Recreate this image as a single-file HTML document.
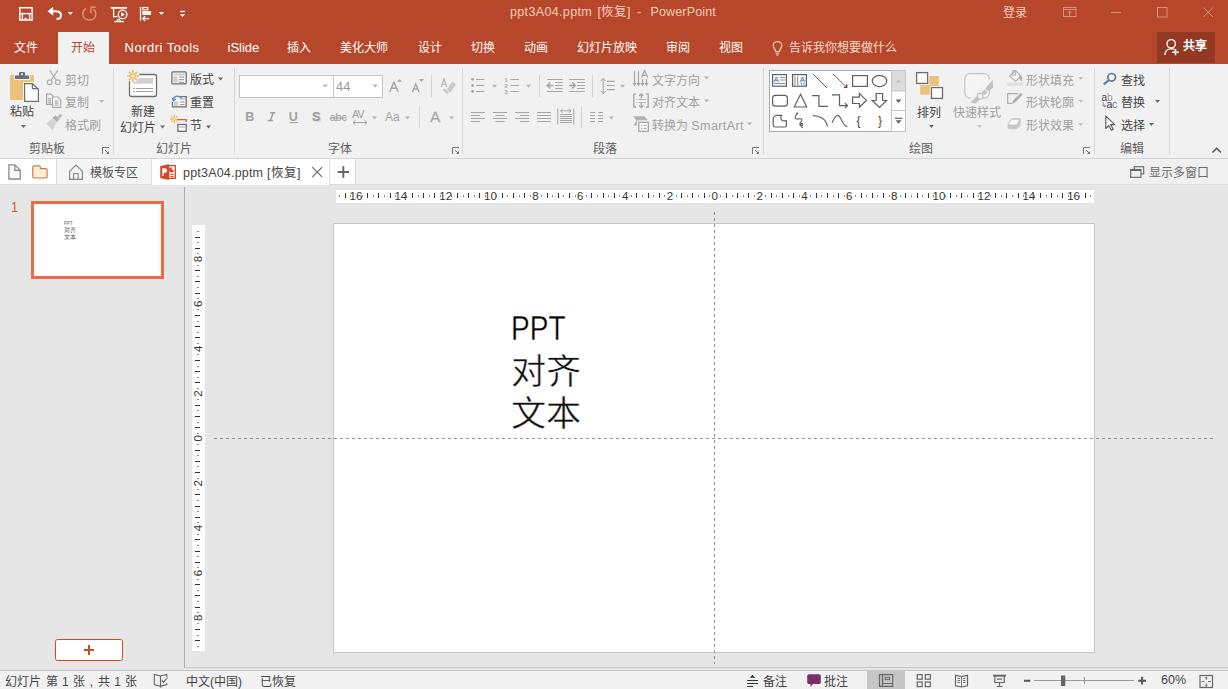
<!DOCTYPE html>
<html lang="zh-CN">
<head>
<meta charset="utf-8">
<style>
*{margin:0;padding:0;box-sizing:border-box}
html,body{width:1228px;height:689px;overflow:hidden;background:#e6e6e6;font-family:"Liberation Sans",sans-serif;}
.a{position:absolute;white-space:nowrap}
svg{position:absolute;overflow:visible}
#title{position:absolute;left:0;top:0;width:1228px;height:64px;background:#b7472a}
.tab{position:absolute;top:32px;height:32px;line-height:32px;font-size:12px;color:#fff}
#ribbon{position:absolute;left:0;top:64px;width:1228px;height:95px;background:#f1f1f1;border-bottom:1px solid #d5d5d5}
.gl{position:absolute;top:139px;font-size:12px;color:#5e5e5e}
.ttl{top:4px;font-size:12.5px;line-height:16px;color:#f3cdb8}
.sep{position:absolute;top:68px;width:1px;height:86px;background:#d6d6d6}
.rt{position:absolute;font-size:12px;color:#9c9c9c}
.t{font-size:12px;line-height:16px}
.en{color:#444}
.dis{color:#a0a0a0}
#docbar{position:absolute;left:0;top:159px;width:1228px;height:26px;background:#f0f0f0;border-bottom:1px solid #dcdcdc}
#status{position:absolute;left:0;top:670px;width:1228px;height:19px;background:#f1f1f1;border-top:1px solid #c6c6c6}
.st{position:absolute;top:673.5px;font-size:12px;color:#444;line-height:17px}
</style>
</head>
<body>
<div id="title"></div>
<!-- title text -->
<div class="a ttl" style="left:510px;letter-spacing:0.35px">ppt3A04.pptm</div>
<div class="a ttl" style="left:597.5px">[恢复]</div>
<div class="a ttl" style="left:637px">-</div>
<div class="a ttl" style="left:650.5px;letter-spacing:0.15px">PowerPoint</div>
<div class="a" style="left:1003px;top:5px;font-size:12px;color:#f3cdb8;line-height:16px">登录</div>

<!-- tabs -->
<div style="position:absolute;left:58px;top:32px;width:51px;height:32px;background:#f1f1f1"></div>
<div class="tab" style="left:14px">文件</div>
<div class="tab" style="left:71px;color:#b7472a">开始</div>
<div class="tab" style="left:124.5px;top:31.5px;font-size:13px;letter-spacing:0.5px">Nordri Tools</div>
<div class="tab" style="left:227.5px;top:31.5px;font-size:13px">iSlide</div>
<div class="tab" style="left:287px">插入</div>
<div class="tab" style="left:340px">美化大师</div>
<div class="tab" style="left:418px">设计</div>
<div class="tab" style="left:471px">切换</div>
<div class="tab" style="left:524px">动画</div>
<div class="tab" style="left:577px">幻灯片放映</div>
<div class="tab" style="left:666px">审阅</div>
<div class="tab" style="left:719px">视图</div>
<div class="tab" style="left:789px;color:#f6dcd0">告诉我你想要做什么</div>
<div style="position:absolute;left:1157px;top:32px;width:58px;height:31px;background:#923823"></div>
<div class="tab" style="left:1183px;top:30px;font-weight:bold">共享</div>

<div id="ribbon"></div>
<div id="docbar"></div>
<div id="status"></div>
<div style="position:absolute;left:0;top:159px;width:57px;height:25px;background:#fff;border-right:1px solid #dedede"></div>
<div style="position:absolute;left:58px;top:159px;width:94px;height:25px;background:#f5f5f5;border-right:1px solid #dedede"></div>
<div style="position:absolute;left:152px;top:159px;width:178px;height:26px;background:#fff;border-right:1px solid #dedede"></div>
<div style="position:absolute;left:330px;top:159px;width:26px;height:25px;background:#fff;border-right:1px solid #dedede"></div>

<svg width="1228" height="689" style="left:0;top:0" viewBox="0 0 1228 689">
<!-- paste -->
<rect x="10" y="75" width="24" height="25" rx="1" fill="#ebc27a"/>
<rect x="14" y="74" width="16" height="6" fill="#f1f1f1"/>
<rect x="15" y="75.5" width="14" height="3.5" fill="#6d6e71"/>
<rect x="19" y="72" width="6" height="4.5" rx="1" fill="#6d6e71"/>
<rect x="21" y="73.3" width="2" height="1.6" fill="#f1f1f1"/>
<rect x="23" y="82" width="17" height="21" fill="#f1f1f1"/>
<path d="M24.6,83.6H32.4L38.4,89.6V101.4H24.6Z" fill="#fff" stroke="#6d6e71" stroke-width="1.2"/>
<path d="M32.4,83.6V88.6H38.4" fill="none" stroke="#6d6e71" stroke-width="1.2"/>
<path d="M21,125H26L23.5,128Z" fill="#666"/>
<!-- scissors -->
<g stroke="#b0b0b0" stroke-width="1.3" fill="none">
<path d="M49.7,70.4L56.2,80.2M57.8,70.4L51.2,80.2"/>
<circle cx="49.7" cy="82.2" r="2.4"/><circle cx="57.8" cy="82.2" r="2.4"/>
</g>
<!-- copy -->
<g stroke="#a8a8a8" stroke-width="1.2" fill="#f1f1f1">
<path d="M46.6,94.1H51L53,96.1V104.4H46.6Z"/>
<path d="M52.6,97H57.8L60.6,99.8V107.4H52.6Z" fill="#fff"/>
<path d="M48.3,98.6H51M48.3,100.6H51M48.3,102.6H51M54.6,101.2H58.6M54.6,103.2H58.6M54.6,105.2H58.6" fill="none"/>
</g>
<!-- format painter -->
<path d="M46.3,123.5L52.5,118.5L56.5,122.5L52.6,130.2Z" fill="#d4d4d4"/>
<path d="M52.5,118L55.5,115.2L59.6,119.3L56.8,122.3Z" fill="#b4b4b4"/>
<path d="M57.5,116.5L60.2,113.8L62.2,115.8L59.5,118.5Z" fill="#b4b4b4"/>
<path d="M99,100H104L101.5,103Z" fill="#b4b4b4"/>
<!-- new slide -->
<rect x="129.5" y="74.5" width="27" height="22" rx="2" fill="#fff" stroke="#6d6e71" stroke-width="1.3"/>
<rect x="133" y="78" width="20" height="5.7" fill="#d0d0d0"/>
<path d="M133,88.5H135M136,88.5H153M133,91.5H135M136,91.5H153" stroke="#a0a0a0" stroke-width="1"/>
<circle cx="133" cy="76" r="6.5" fill="#f1f1f1"/>
<g stroke="#edbc5a" stroke-width="1.6">
<path d="M133,70V73.3M133,78.7V82M127,76H130.3M135.7,76H139M128.8,71.8L131,74M135,78L137.2,80.2M137.2,71.8L135,74M131,78L128.8,80.2"/>
</g>
<circle cx="133" cy="76" r="2.2" fill="none" stroke="#edbc5a" stroke-width="1.2"/>
<path d="M160,125.5H165L162.5,128.5Z" fill="#666"/>
<!-- layout -->
<rect x="171.9" y="71.9" width="14.3" height="12" rx="1" fill="#fff" stroke="#6d6e71" stroke-width="1.3"/>
<rect x="173.3" y="73.3" width="11.5" height="2.2" fill="#d0d0d0"/>
<rect x="173.3" y="76.3" width="4.5" height="6.3" fill="#d0d0d0"/>
<path d="M179,77H184M179,79.7H184M179,82.3H184" stroke="#888" stroke-width="1"/>
<path d="M218,77.5H223L220.5,80.5Z" fill="#666"/>
<!-- reset -->
<path d="M177,96.6H186.2V106.8H172.5V102" fill="#fff" stroke="#6d6e71" stroke-width="1.3"/>
<rect x="174" y="101.5" width="4.5" height="4.5" fill="#d0d0d0"/>
<rect x="179.5" y="98" width="5.5" height="2" fill="#d0d0d0"/>
<path d="M180,102H184.5M180,104.7H184.5" stroke="#888" stroke-width="1"/>
<path d="M172.8,100.5C173.5,96 179,94.5 181.8,98.5" fill="none" stroke="#7090c4" stroke-width="1.5"/>
<path d="M171.5,97.5L173.3,102L176.5,99Z" fill="#7090c4"/>
<!-- section -->
<g stroke="#edbc5a" stroke-width="1.2">
<path d="M174.4,114.8V117.3M174.4,120.9V123.4M170.1,119.1H172.6M176.2,119.1H178.7M171.4,116.1L172.8,117.5M176,120.7L177.4,122.1M177.4,116.1L176,117.5M172.8,120.7L171.4,122.1"/>
</g>
<circle cx="174.4" cy="119.1" r="1.5" fill="none" stroke="#edbc5a" stroke-width="1"/>
<path d="M177.5,119.6H186.2V122" fill="none" stroke="#e05a2a" stroke-width="1.3"/>
<rect x="177.9" y="124.5" width="8.3" height="6.8" fill="#fff" stroke="#6d6e71" stroke-width="1.3"/>
<rect x="179.3" y="126" width="5.5" height="2" fill="#d0d0d0"/>
<path d="M206,125.5H211L208.5,128.5Z" fill="#666"/>
<!-- font group -->
<rect x="239.5" y="75.5" width="94" height="22" fill="#fff" stroke="#c6c6c6"/>
<rect x="333.5" y="75.5" width="49" height="22" fill="#fff" stroke="#c6c6c6"/>
<path d="M322.5,84.5H328L325.25,87.5Z" fill="#b4b4b4"/>
<path d="M372.5,84.5H378L375.25,87.5Z" fill="#b4b4b4"/>
<g stroke="#a6a6a6" stroke-width="1.4" fill="none" stroke-linejoin="miter">
<path d="M389.6,92L393.9,82.2L398.2,92M391.3,88.3H396.5"/>
<path d="M412.4,92L415.7,84L419,92M413.7,89H417.7"/>
</g>
<path d="M397,81.8L399.5,79.2L402,81.8Z" fill="#a6a6a6"/>
<path d="M419,79L424,79L421.5,82Z" fill="#a6a6a6"/>
<rect x="431" y="75" width="1" height="22" fill="#d4d4d4"/>
<!-- clear formatting -->
<path d="M441.3,87L444,78.8L446.7,87M442.2,84.3H445.8" stroke="#b4b4b4" stroke-width="1.1" fill="none"/>
<path d="M447,89.5L452.5,81.3L456,84.5L450.3,92.5Z" fill="#c8c8c8"/>
<path d="M442.8,90.3L444.6,88.5L449,92.2L447.2,94Z" fill="#c8c8c8"/>
<g font-family="Liberation Sans" fill="#a0a0a0">
<text x="245.3" y="121" font-size="12.5" font-weight="bold">B</text>
</g><path d="M270.3,112.8H275.3M267.8,120.6H272.8M273.2,112.8L270.4,120.6" stroke="#a0a0a0" stroke-width="1.5" fill="none"/><g font-family="Liberation Sans" fill="#a0a0a0">
<text x="288.8" y="121" font-size="12.5" font-weight="bold">U</text>
<text x="312" y="121" font-size="12.5" font-weight="bold">S</text>
<text x="329.8" y="121" font-size="11" letter-spacing="-0.3">abc</text>
</g>
<path d="M289.5,122.6H297.8" stroke="#a0a0a0" stroke-width="1"/>
<path d="M329.5,118H346.5" stroke="#a0a0a0" stroke-width="1"/>
<text x="313.3" y="122.3" font-size="12.5" font-weight="bold" font-family="Liberation Sans" fill="#d6d6d6" opacity="0.8">S</text>
<text x="312" y="121" font-size="12.5" font-weight="bold" font-family="Liberation Sans" fill="#a0a0a0">S</text>
<!-- AV spacing -->
<text x="352" y="118.3" font-size="10.5" font-family="Liberation Sans" fill="#a0a0a0" letter-spacing="-0.6">AV</text>
<path d="M353,122.5H367M355.5,120.2L353,122.5L355.5,124.8M364.5,120.2L367,122.5L364.5,124.8" stroke="#a0a0a0" stroke-width="1" fill="none"/>
<path d="M372,116.5H377L374.5,119.5Z" fill="#b4b4b4"/>
<text x="385" y="121.2" font-size="12" font-family="Liberation Sans" fill="#a6a6a6">Aa</text>
<path d="M405,116.5H410L407.5,119.5Z" fill="#b4b4b4"/>
<rect x="419" y="106" width="1" height="21.5" fill="#d4d4d4"/>
<text x="430.3" y="121.5" font-size="15" font-family="Liberation Sans" fill="#a6a6a6" stroke="#a6a6a6" stroke-width="0.3">A</text>
<path d="M449,116.5H454L451.5,119.5Z" fill="#b4b4b4"/>
<!-- paragraph group -->
<g fill="#a6a6a6">
<circle cx="472.6" cy="79.3" r="1.4"/><circle cx="472.6" cy="85.5" r="1.4"/><circle cx="472.6" cy="91.5" r="1.4"/>
</g>
<path d="M476,79.5H484.3M476,85.5H484.3M476,91.5H484.3" stroke="#a6a6a6" stroke-width="1"/>
<path d="M492,84.8H497L494.5,87.8Z" fill="#b4b4b4"/>
<g font-family="Liberation Sans" font-size="5.8" font-weight="bold" fill="#a6a6a6"><text x="504.6" y="81.6">1</text><text x="504.6" y="87.6">2</text><text x="504.6" y="93.6">3</text></g>
<path d="M510.5,79.5H518.8M510.5,85.5H518.8M510.5,91.5H518.8" stroke="#a6a6a6" stroke-width="1"/>
<path d="M526,84.8H531L528.5,87.8Z" fill="#b4b4b4"/>
<rect x="539" y="75" width="1" height="22" fill="#d4d4d4"/>
<path d="M547,79.5H562.7M555,85.5H562.7M547,91.5H562.7M555,82.5H562.7M555,88.5H562.7" stroke="#a6a6a6" stroke-width="1"/>
<path d="M547.3,85.5H553.5M550.3,82.5L547.3,85.5L550.3,88.5" stroke="#a6a6a6" stroke-width="1.5" fill="none"/>
<path d="M569,79.5H584.8M577,85.5H584.8M569,91.5H584.8M577,82.5H584.8M577,88.5H584.8" stroke="#a6a6a6" stroke-width="1"/>
<path d="M569,85.5H575.2M572.2,82.5L575.2,85.5L572.2,88.5" stroke="#a6a6a6" stroke-width="1.5" fill="none"/>
<rect x="592" y="75" width="1" height="22" fill="#d4d4d4"/>
<path d="M603.2,78.5V93.5M600.8,81L603.2,78.3L605.6,81M600.8,91L603.2,93.7L605.6,91" stroke="#a6a6a6" stroke-width="1" fill="none"/>
<path d="M607,81.3H614.8M607,85.5H614.8M607,89.7H614.8" stroke="#a6a6a6" stroke-width="1.2"/>
<path d="M620,84.8H625L622.5,87.8Z" fill="#b4b4b4"/>
<g stroke="#a6a6a6" stroke-width="1">
<path d="M471,112.5H485M471,115.5H480M471,118.5H485M471,121.5H480"/>
<path d="M493,112.5H507M495.5,115.5H504.5M493,118.5H507M495.5,121.5H504.5"/>
<path d="M515,112.5H529M520,115.5H529M515,118.5H529M520,121.5H529"/>
<path d="M537,112.5H551M537,115.5H551M537,118.5H551M537,121.5H551"/>
<path d="M557.8,108.5V124.5M573.8,108.5V124.5M560,114.5H572M560,116.5H572M560,118.5H572M560,120.5H572M560,122.5H572"/>
<path d="M560.5,110.8H571M562.5,108.8L560.5,110.8L562.5,112.8M569,108.8L571,110.8L569,112.8" fill="none"/>
</g>
<rect x="581" y="106" width="1" height="22" fill="#d4d4d4"/>
<path d="M590,112.5H595M598,112.5H603M590,115.5H595M598,115.5H603M590,118.5H595M598,118.5H603M590,121.5H595M598,121.5H603" stroke="#a6a6a6" stroke-width="1"/>
<path d="M608.8,116.5H613.8L611.3,119.5Z" fill="#b4b4b4"/>
<!-- text direction -->
<g stroke="#a6a6a6" fill="none">
<path d="M634.5,71.3V84.5M638.5,71.3V84.5M642.5,79V84.5M646.5,79V84.5" stroke-width="1.2"/>
<path d="M633,83L634.5,85.2L636,83M637,83L638.5,85.2L640,83M641,83L642.5,85.2L644,83M645,83L646.5,85.2L648,83" stroke-width="1.1"/>
<path d="M641.5,77.6L644.6,70.6L647.7,77.6M642.6,75.3H646.6" stroke-width="1.2"/>
</g>
<path d="M704,76.5H709L706.5,79.5Z" fill="#b4b4b4"/>
<!-- align text -->
<path d="M636,94.2H633.8V107H636M646,94.2H648.2V107H646" stroke="#a6a6a6" stroke-width="1.3" fill="none"/>
<path d="M641.2,94V98.5M639,96L641.2,93.8L643.4,96M641.2,103V107.6M639,105.4L641.2,107.6L643.4,105.4" stroke="#a6a6a6" stroke-width="1.2" fill="none"/>
<path d="M636.3,99.5H637.3M638.5,99.5H646M636.3,102.5H637.3M638.5,102.5H646" stroke="#b4b4b4" stroke-width="1"/>
<path d="M704,99.5H709L706.5,102.5Z" fill="#b4b4b4"/>
<!-- smartart -->
<path d="M633.3,116.3H644.6L648,120.8H637.5V125.5H633.3L636.3,120.8Z" fill="#b4b4b4"/>
<rect x="638.3" y="121.3" width="10.6" height="10.3" fill="#f1f1f1" stroke="#f1f1f1" stroke-width="2"/>
<rect x="638.8" y="122.3" width="9.6" height="9" fill="#f7f7f7" stroke="#a6a6a6" stroke-width="1.3"/>
<path d="M641,125.5H642M643.5,125.5H646.5M641,128.5H642M643.5,128.5H646.5" stroke="#a6a6a6" stroke-width="1"/>
<path d="M747,122.5H752L749.5,125.5Z" fill="#b4b4b4"/>
<!-- shapes gallery -->
<rect x="769.5" y="70.5" width="136" height="61" fill="#fff" stroke="#ababab"/>
<rect x="891.5" y="70.5" width="14" height="61" fill="#fff" stroke="#c6c6c6"/>
<rect x="892" y="71" width="13" height="20" fill="#dcdcdc"/>
<path d="M891.5,91H905.5M891.5,110.5H905.5" stroke="#c6c6c6"/>
<path d="M896,82.5L898.5,79.7L901,82.5Z" fill="#bdbdbd"/>
<path d="M895.5,99.5H901.5L898.5,103Z" fill="#666"/>
<path d="M895,118.3H902.5" stroke="#666" stroke-width="1.2"/>
<path d="M895.5,120.3H901.5L898.5,123.8Z" fill="#666"/>
<g stroke="#5f5f5f" stroke-width="1.2" fill="none">
<rect x="772.6" y="74.6" width="13.8" height="11.6"/>
<path d="M780.3,77.5H785M780.3,80H785M774,83.5H785" stroke="#8a8a8a" stroke-width="1"/>
<rect x="792.6" y="74.6" width="13.8" height="11.6"/>
<path d="M795,76.3V85M797.7,76.3V85" stroke="#8a8a8a" stroke-width="1"/>
<path d="M801.5,82.5V85M804,82.5V85" stroke="#8a8a8a" stroke-width="1"/>
<path d="M813,74L827,88" stroke-width="1"/>
<path d="M833,74L847,87.5" stroke-width="1"/>
<rect x="852.6" y="75.6" width="14.8" height="10.8"/>
<ellipse cx="879.5" cy="81" rx="7.2" ry="5.6"/>
<rect x="772.6" y="95.4" width="14.8" height="10.8" rx="3"/>
<path d="M800.5,94.3L806.7,107H794.3Z"/>
<path d="M812.1,95.7H818.9V106.3H827.9"/>
<path d="M832,94.8H839.5V105.6H847.3M845,103.2L847.5,105.6L845,108"/>
<path d="M852.6,97.2H859.4V93.4L866.4,100.4L859.4,107.3V103.5H852.6Z"/>
<path d="M876.2,93.5H882.6V100.5H886.5L879.4,107.5L872.3,100.5H876.2Z"/>
<path d="M773.2,119C773.2,117 775,115.4 777,115.4H781.5C780.5,116.5 780.5,119 782,120.3C783.3,121.3 786.4,120.8 786.4,120.8V125.6C786.4,126.4 785.8,127 785,127H775C774,127 773.2,126.2 773.2,125.2Z"/>
<path d="M797.3,113.2C796,115 794.5,117 795.5,118.5C797,120 799.5,118.2 801,118.8C803,119.8 801,121.8 800.2,123C799.2,124.8 800.3,126.5 801.8,125.8C803.3,125 802.8,122.8 801.3,123.5C800,124.5 801.8,127 802.6,128" stroke-width="1.1"/>
<path d="M813,115.6C818.5,115.6 826.5,118.5 827.4,126.6" stroke-width="1.1"/>
<path d="M832,122.8C833.5,119.5 835.5,115.4 837.6,115.4C841.5,115.4 842,126.5 847.4,126.6" stroke-width="1.1"/>
</g>
<path d="M843.8,87.3H846.8V84.3" stroke="#7b2b6b" stroke-width="1.2" fill="none"/>
<circle cx="797.3" cy="113.4" r="0.8" fill="#7b2b6b"/>
<g font-family="Liberation Sans" font-size="8" fill="#5b7fb8" stroke="#5b7fb8" stroke-width="0.25"><text x="773.4" y="81.5">A</text><text x="799.8" y="81.5">A</text></g>
<g font-family="Liberation Sans" font-size="12" fill="#444"><text x="856.5" y="125">{</text><text x="878" y="125">}</text></g>
<!-- arrange -->
<rect x="920.2" y="76" width="18.7" height="18.7" fill="#ebc27a"/>
<rect x="916.6" y="72.6" width="11" height="10.8" fill="#fff" stroke="#f1f1f1" stroke-width="3.3"/>
<rect x="931.5" y="87.6" width="11" height="10.8" fill="#fff" stroke="#f1f1f1" stroke-width="3.3"/>
<rect x="916.6" y="72.6" width="11" height="10.8" fill="#fff" stroke="#6d6e71" stroke-width="1.3"/>
<rect x="931.5" y="87.6" width="11" height="10.8" fill="#fff" stroke="#6d6e71" stroke-width="1.3"/>
<path d="M929,125H934L931.5,128Z" fill="#666"/>
<!-- quick styles -->
<rect x="964.8" y="73.6" width="24.6" height="24.6" rx="5.5" fill="#f5f5f5" stroke="#c4c4c4" stroke-width="1.2"/>
<path d="M994,80L972,102" stroke="#f1f1f1" stroke-width="7"/>
<path d="M992.7,79.8L993,87.6L988.2,91.8L985.2,88.8Z" fill="#c2c2c2"/>
<path d="M984.6,89.6L987.3,92.4L984.7,95L981.9,92.3Z" fill="#c2c2c2"/>
<circle cx="980.3" cy="96.3" r="2.9" fill="#f1f1f1" stroke="#c2c2c2" stroke-width="1.1"/>
<path d="M970.5,102.5L976.8,96.3C977.5,98 978.5,99 980.3,99.3L975.5,103.5Z" fill="#c2c2c2"/>
<path d="M977,125H982L979.5,128Z" fill="#c6c6c6"/>
<!-- shape fill -->
<path d="M1009.6,76L1015.6,70.6L1021,76L1015.6,81.3Z" fill="#f1f1f1" stroke="#b0b0b0" stroke-width="1.1"/>
<path d="M1012.8,76V71.3C1012.8,70.6 1013.3,70.2 1014,70.2C1014.7,70.2 1015.2,70.6 1015.2,71.3V76" fill="none" stroke="#b0b0b0" stroke-width="1.1"/>
<path d="M1018.8,75.2C1020.5,75.5 1022.3,76.5 1022.3,77.5C1022.3,79 1022,80.5 1021.5,81.8L1019.3,78.5Z" fill="#b0b0b0"/>
<rect x="1007.2" y="82.5" width="16" height="3.3" fill="#e0e0e0"/>
<path d="M1078.3,77H1083.4L1080.85,80Z" fill="#c6c6c6"/>
<!-- shape outline -->
<path d="M1017.8,93.6H1007.6V103.4H1011.8" fill="none" stroke="#b0b0b0" stroke-width="1.2"/>
<path d="M1012.2,104L1013,100.6L1019.8,93.8C1020.4,93.2 1021.2,93.2 1021.8,93.8C1022.4,94.4 1022.4,95.2 1021.8,95.8L1015,102.6Z" fill="#b0b0b0"/>
<path d="M1078.3,100H1083.4L1080.85,103Z" fill="#c6c6c6"/>
<!-- shape effects -->
<path d="M1007.5,125.5L1011,119.5C1011.4,118.6 1012,118.2 1013,118.2H1019C1020.3,118.2 1021.2,119 1021,120.2L1020.6,124.5C1020.4,125.7 1019.6,126.6 1018.8,127.2L1016.3,129.2H1009.5C1008.3,129.2 1007.3,128.2 1007.3,127Z" fill="#c8c8c8"/>
<path d="M1008,125L1011.5,119.2H1020.2L1016.8,125Z" fill="#fafafa" stroke="#c0c0c0" stroke-width="0.8"/>
<path d="M1078.3,123H1083.4L1080.85,126Z" fill="#c6c6c6"/>
<!-- find -->
<circle cx="1111.7" cy="77.3" r="3.8" fill="none" stroke="#5d78a3" stroke-width="1.7"/>
<path d="M1109,80L1103.8,84.3" stroke="#5d78a3" stroke-width="2.2"/>
<!-- replace -->
<text x="1101.6" y="100.6" font-family="Liberation Sans" font-size="10" letter-spacing="-0.2"><tspan fill="#444">a</tspan><tspan fill="#9a9a9a">b</tspan></text>
<text x="1106.4" y="108" font-family="Liberation Sans" font-size="10.5" letter-spacing="-0.2"><tspan fill="#333">a</tspan><tspan fill="#5d78a3">c</tspan></text>
<path d="M1103.2,102.5V106H1105.5M1104.2,104.8L1105.6,106L1104.2,107.2" fill="none" stroke="#5d78a3" stroke-width="0.9"/>
<path d="M1155,100H1160L1157.5,103Z" fill="#666"/>
<!-- select -->
<path d="M1105.8,116.2V128.5L1108.8,125.5L1111.5,130.2L1113.2,129.2L1110.6,124.6H1114.6Z" fill="#fff" stroke="#555" stroke-width="1.1" stroke-linejoin="round"/>
<path d="M1149,123H1154L1151.5,126Z" fill="#666"/>
<!-- collapse -->
<path d="M1212.5,152.5L1216.7,148.3L1220.9,152.5" fill="none" stroke="#555" stroke-width="1.5"/>
<!-- QAT -->
<g stroke="#fff" fill="none">
<path d="M19.8,7.7H32.1V20.1H19.8Z" stroke-width="1.5"/>
<path d="M20.5,13.6H31.5" stroke-width="1.5"/>
<path d="M22.4,14V19.6M29.6,14V19.6" stroke-width="1.3"/>
<path d="M53,11.3H55.5C59,11.3 61,13 61,15.5C61,17.8 59,19 56.5,19" stroke-width="2"/>
</g>
<path d="M47.5,11.3L53.2,6.8V15.8Z" fill="#fff"/>
<rect x="24.6" y="17.8" width="2" height="2" fill="#fff"/>
<path d="M67.7,12H72.9L70.3,15Z" fill="#fff"/>
<path d="M86,8.5C83.3,10 82.8,12 82.8,14C82.8,17.8 85.8,20 89.4,20C93,20 95.8,17.8 95.8,14C95.8,12 95,10.3 93.5,9.2M91,13.3V7.3H95.8" fill="none" stroke="#d9907a" stroke-width="1.5"/>
<g stroke="#fff" fill="none">
<path d="M110.9,7.9H127" stroke-width="1.8"/>
<path d="M113.6,8.8V16.6H117.5" stroke-width="1.3"/>
<circle cx="122.6" cy="14.4" r="4.3" stroke-width="1.3"/>
<path d="M114.1,21.6H124" stroke-width="1.3"/>
<path d="M118.6,18.8L116.5,21.3M118.6,18.8L120.7,21.3" stroke-width="1.1"/>
</g>
<path d="M121.3,12L125,14.4L121.3,16.8Z" fill="#fff"/>
<g stroke="#fff" fill="none">
<path d="M140.5,6.9V20.8" stroke-width="1.3"/>
<rect x="142.8" y="7.5" width="5" height="2.3" stroke-width="1.1"/>
<path d="M142.8,18.6H148.9" stroke-width="1.3"/>
<path d="M145.2,16.2L142.8,18.6L145.2,21" stroke-width="1.3"/>
</g>
<rect x="142.3" y="11" width="8.8" height="4" fill="#f0f0f0"/>
<path d="M158.9,12H164L161.45,15Z" fill="#fff"/>
<rect x="180" y="10.8" width="5" height="1.3" fill="#fff"/>
<path d="M180,14.2H185L182.5,17Z" fill="#fff"/>
<!-- window controls -->
<g stroke="#d9907a" stroke-width="1" fill="none">
<rect x="1063.5" y="7.5" width="12.5" height="9"/>
<path d="M1063.5,9.5H1076M1069.75,11V16.5M1068,12.8L1069.75,11L1071.5,12.8"/>
<path d="M1111,12.5H1121"/>
<rect x="1157.5" y="7.5" width="9.5" height="9.5"/>
<path d="M1203.5,7.5L1213,17M1213,7.5L1203.5,17"/>
</g>
<!-- share icon -->
<g stroke="#fff" stroke-width="1.3" fill="none">
<circle cx="1171.2" cy="43.8" r="4.2" stroke-width="1.4"/>
<path d="M1164.8,55C1165,51.5 1167.5,48.8 1171,48.6C1172.2,48.6 1173.3,48.9 1174.3,49.4" stroke-width="1.4"/>
<path d="M1175.5,49V55.3M1172.2,52.2H1178.8" stroke-width="1.6"/>
</g>
<!-- lightbulb -->
<g stroke="#f6dcd0" stroke-width="1.1" fill="none">
<path d="M775.6,51.5C775.6,49 773.2,48.2 773.2,45.5C773.2,43 775.1,41.8 777.5,41.8C779.9,41.8 781.8,43 781.8,45.5C781.8,48.2 779.4,49 779.4,51.5Z"/>
<path d="M775.8,53.3H779.2M776.3,55H778.7"/>
</g>
<!-- docbar icons -->
<path d="M8.9,164.9H14.8L20.2,170.3V179H8.9Z" fill="#fbfbfb" stroke="#8a8a8a" stroke-width="1.3"/>
<path d="M14.8,164.9V170.3H20.2" fill="none" stroke="#8a8a8a" stroke-width="1.3"/>
<path d="M32.8,167C32.8,166.2 33.4,165.8 34.2,165.8H38.8C39.6,165.8 40.3,166.4 40.3,167.2V168.6H45.8C46.6,168.6 47.1,169.2 47.1,170V176.6C47.1,177.4 46.5,178 45.7,178H34.2C33.4,178 32.8,177.4 32.8,176.6Z" fill="#ffefd3" stroke="#d4725a" stroke-width="1.2"/>
<path d="M69.6,179.3V171.3L76,165L82.4,171.3V179.3Z" fill="none" stroke="#8a8a8a" stroke-width="1.2"/>
<path d="M73.6,179.3V173.5H78.2V179.3" fill="none" stroke="#8a8a8a" stroke-width="1.2"/>
<path d="M160.2,166.2L168.8,164.1V180L160.2,178.1Z" fill="#d24726"/>
<path d="M162.3,176V168.3H164.8C166.3,168.3 167.2,169.3 167.2,170.6C167.2,171.9 166.3,172.9 164.8,172.9H163.6V176Z" fill="#fff"/>
<rect x="168.7" y="165.6" width="6.6" height="12.8" fill="#fff" stroke="#d24726" stroke-width="1.3"/>
<path d="M170.3,174.4H173.7M170.3,176.6H173.7" stroke="#d24726" stroke-width="1"/>
<path d="M171.8,167.3A2.6,2.6 0 1 0 174.1,170.6L171.8,170Z" fill="#d24726"/>
<path d="M312.3,167.2L322.2,177.1M322.2,167.2L312.3,177.1" stroke="#666" stroke-width="1.1"/>
<path d="M343.3,166.3V177.7M337.6,172H349" stroke="#666" stroke-width="2"/>
<rect x="1134.2" y="166.7" width="9.5" height="7.2" fill="none" stroke="#666" stroke-width="1.1"/>
<rect x="1130.7" y="169.5" width="10.2" height="7.8" fill="#f0f0f0" stroke="#666" stroke-width="1.1"/>
<path d="M1130.7,170H1140.9" stroke="#666" stroke-width="2"/>
<!-- main area -->
<path d="M184.5,187V668" stroke="#ababab" stroke-width="1"/>
<path d="M186,667.5H1228" stroke="#c6c6c6" stroke-width="1"/>
<rect x="336" y="190" width="758" height="13" fill="#fff"/>
<rect x="192" y="225" width="13" height="426" fill="#fff"/>
<path d="M345.5,193V198M367.5,193V198M378.5,193V198M390.5,193V198M412.5,193V198M423.5,193V198M434.5,193V198M457.5,193V198M468.5,193V198M479.5,193V198M502.5,193V198M513.5,193V198M524.5,193V198M547.5,193V198M558.5,193V198M569.5,193V198M591.5,193V198M603.5,193V198M614.5,193V198M636.5,193V198M648.5,193V198M659.5,193V198M681.5,193V198M692.5,193V198M704.5,193V198M726.5,193V198M737.5,193V198M748.5,193V198M771.5,193V198M782.5,193V198M793.5,193V198M816.5,193V198M827.5,193V198M838.5,193V198M861.5,193V198M872.5,193V198M883.5,193V198M905.5,193V198M917.5,193V198M928.5,193V198M950.5,193V198M961.5,193V198M973.5,193V198M995.5,193V198M1006.5,193V198M1018.5,193V198M1040.5,193V198M1051.5,193V198M1062.5,193V198M1085.5,193V198" stroke="#333" stroke-width="1"/>
<path d="M339.5,195V197M350.5,195V197M362.5,195V197M373.5,195V197M384.5,195V197M395.5,195V197M406.5,195V197M418.5,195V197M429.5,195V197M440.5,195V197M451.5,195V197M463.5,195V197M474.5,195V197M485.5,195V197M496.5,195V197M507.5,195V197M519.5,195V197M530.5,195V197M541.5,195V197M552.5,195V197M563.5,195V197M575.5,195V197M586.5,195V197M597.5,195V197M608.5,195V197M619.5,195V197M631.5,195V197M642.5,195V197M653.5,195V197M664.5,195V197M676.5,195V197M687.5,195V197M698.5,195V197M709.5,195V197M720.5,195V197M732.5,195V197M743.5,195V197M754.5,195V197M765.5,195V197M776.5,195V197M788.5,195V197M799.5,195V197M810.5,195V197M821.5,195V197M833.5,195V197M844.5,195V197M855.5,195V197M866.5,195V197M877.5,195V197M889.5,195V197M900.5,195V197M911.5,195V197M922.5,195V197M933.5,195V197M945.5,195V197M956.5,195V197M967.5,195V197M978.5,195V197M990.5,195V197M1001.5,195V197M1012.5,195V197M1023.5,195V197M1034.5,195V197M1046.5,195V197M1057.5,195V197M1068.5,195V197M1079.5,195V197M1090.5,195V197" stroke="#8a8a8a" stroke-width="1"/>
<g font-family="Liberation Sans" font-size="11.5" fill="#333" text-anchor="middle"><text x="356.0" y="199.6">16</text><text x="400.8" y="199.6">14</text><text x="445.7" y="199.6">12</text><text x="490.5" y="199.6">10</text><text x="535.4" y="199.6">8</text><text x="580.2" y="199.6">6</text><text x="625.1" y="199.6">4</text><text x="669.9" y="199.6">2</text><text x="714.8" y="199.6">0</text><text x="759.6" y="199.6">2</text><text x="804.5" y="199.6">4</text><text x="849.3" y="199.6">6</text><text x="894.2" y="199.6">8</text><text x="939.0" y="199.6">10</text><text x="983.9" y="199.6">12</text><text x="1028.8" y="199.6">14</text><text x="1073.6" y="199.6">16</text></g>
<path d="M195,237.5H200M195,248.5H200M195,270.5H200M195,281.5H200M195,293.5H200M195,315.5H200M195,326.5H200M195,337.5H200M195,360.5H200M195,371.5H200M195,382.5H200M195,405.5H200M195,416.5H200M195,427.5H200M195,450.5H200M195,461.5H200M195,472.5H200M195,494.5H200M195,506.5H200M195,517.5H200M195,539.5H200M195,551.5H200M195,562.5H200M195,584.5H200M195,595.5H200M195,607.5H200M195,629.5H200M195,640.5H200" stroke="#333" stroke-width="1"/>
<path d="M197,231.5H199M197,242.5H199M197,253.5H199M197,265.5H199M197,276.5H199M197,287.5H199M197,298.5H199M197,309.5H199M197,321.5H199M197,332.5H199M197,343.5H199M197,354.5H199M197,366.5H199M197,377.5H199M197,388.5H199M197,399.5H199M197,410.5H199M197,422.5H199M197,433.5H199M197,444.5H199M197,455.5H199M197,466.5H199M197,478.5H199M197,489.5H199M197,500.5H199M197,511.5H199M197,522.5H199M197,534.5H199M197,545.5H199M197,556.5H199M197,567.5H199M197,579.5H199M197,590.5H199M197,601.5H199M197,612.5H199M197,623.5H199M197,635.5H199M197,646.5H199" stroke="#8a8a8a" stroke-width="1"/>
<g font-family="Liberation Sans" font-size="11.5" fill="#333" text-anchor="middle"><text transform="translate(202,259.0) rotate(-90)" x="0" y="0">8</text><text transform="translate(202,303.8) rotate(-90)" x="0" y="0">6</text><text transform="translate(202,348.7) rotate(-90)" x="0" y="0">4</text><text transform="translate(202,393.5) rotate(-90)" x="0" y="0">2</text><text transform="translate(202,438.4) rotate(-90)" x="0" y="0">0</text><text transform="translate(202,483.2) rotate(-90)" x="0" y="0">2</text><text transform="translate(202,528.1) rotate(-90)" x="0" y="0">4</text><text transform="translate(202,573.0) rotate(-90)" x="0" y="0">6</text><text transform="translate(202,617.8) rotate(-90)" x="0" y="0">8</text></g>
<rect x="333.5" y="223.5" width="761" height="429" fill="#fff" stroke="#c6c6c6" stroke-width="1"/>
<path d="M714.5,212V664" stroke="#8f8f8f" stroke-width="1" stroke-dasharray="3,3"/>
<path d="M214,438.5H1213" stroke="#8f8f8f" stroke-width="1" stroke-dasharray="3,3"/>
<!-- thumbnail -->
<rect x="32.5" y="202.5" width="130" height="75" fill="#fff" stroke="#ec6b45" stroke-width="3"/>
<rect x="55.5" y="639.5" width="67" height="21" rx="2" fill="#fff" stroke="#d24726" stroke-width="1"/>
<path d="M89,645V655M84,650H94" stroke="#d24726" stroke-width="2"/>
<!-- status icons -->
<path d="M749.8,677.8L752.5,674.8L755.2,677.8Z" fill="#333"/>
<path d="M747.2,680.5H758M747.2,683.5H758M747.2,686.5H753" stroke="#333" stroke-width="1.1"/>
<path d="M809,674.3H819C820,674.3 820.8,675.1 820.8,676.1V682.3C820.8,683.3 820,684.1 819,684.1H813L810.5,687V684.1H809C808,684.1 807.2,683.3 807.2,682.3V676.1C807.2,675.1 808,674.3 809,674.3Z" fill="#7a2f6b"/>
<rect x="867" y="671" width="38" height="18" fill="#c6c6c6"/>
<g stroke="#666" stroke-width="1.2" fill="none">
<rect x="879.5" y="674.6" width="13.2" height="11.8"/>
<path d="M882.5,674.6V686.4M882.5,683.5H892.7"/>
<rect x="885.2" y="677.3" width="4.3" height="2.3" stroke-width="1"/>
<rect x="917.2" y="674.6" width="5" height="4.6"/><rect x="925.3" y="674.6" width="5" height="4.6"/>
<rect x="917.2" y="682" width="5" height="4.6"/><rect x="925.3" y="682" width="5" height="4.6"/>
<path d="M955.5,675.3L961.5,676.5L967.5,675.3V685.8L961.5,687L955.5,685.8Z"/>
<path d="M961.5,676.5V687M957.5,678.5H960M957.5,680.5H960M957.5,682.5H960M963,678.5H965.5M963,680.5H965.5M963,682.5H965.5" stroke-width="0.9"/>
<path d="M993.5,675.8H1005.5M994.8,676.5V682.5H1004.2V676.5M999.5,682.5V686.5M996.5,686.5H1002.5M997,679.2H1002" />
<rect x="1200" y="675.5" width="12.5" height="12" />
</g>
<path d="M993,675.5H1006" stroke="#666" stroke-width="1.6"/>
<g stroke="#666" stroke-width="0.9" fill="none">
<path d="M1206.25,677V680M1206.25,683V686.5M1201.5,681.5H1204.5M1208,681.5H1211M1205,678.2L1206.25,677L1207.5,678.2M1205,685.3L1206.25,686.5L1207.5,685.3"/>
</g>
<path d="M1024,680.7H1030.3M1138.2,680.7H1146M1142.1,676.8V684.6" stroke="#555" stroke-width="2"/>
<path d="M1034,680.5H1134" stroke="#9a9a9a" stroke-width="1"/>
<path d="M1084.5,677V684" stroke="#9a9a9a" stroke-width="1"/>
<rect x="1061" y="675.5" width="4.3" height="10.5" fill="#666"/>
<!-- book icon status -->
<path d="M160.5,676V686.3L154.3,684.5V674.5Z" fill="none" stroke="#666" stroke-width="1.1"/>
<path d="M160.5,676L166.8,674.5V677M166.8,683.2V684.5L160.5,686.3" fill="none" stroke="#666" stroke-width="1.1"/>
<path d="M161.8,680.5L163.5,682.3L167.5,677.5" fill="none" stroke="#666" stroke-width="1.1"/>
<path d="M159.5,686.5L160.5,688L161.5,686.5" fill="#666"/>
<!-- dialog launchers -->
<g stroke="#777" stroke-width="1" fill="none">
<path d="M102.5,154V147.5H109M105,150L108.5,153.5"/>
<path d="M452.5,154V147.5H459M455,150L458.5,153.5"/>
<path d="M752.5,154V147.5H759M755,150L758.5,153.5"/>
<path d="M1083.5,154V147.5H1090M1086,150L1089.5,153.5"/>
</g>
<g fill="#777">
<path d="M109,151V154H106Z"/><path d="M459,151V154H456Z"/><path d="M759,151V154H756Z"/><path d="M1090,151V154H1087Z"/>
</g>
</svg>

<!-- ===== RIBBON ===== -->
<div class="sep" style="left:113px"></div>
<div class="sep" style="left:234px"></div>
<div class="sep" style="left:462px"></div>
<div class="sep" style="left:763px"></div>
<div class="sep" style="left:1094px"></div>
<div class="sep" style="left:1169px"></div>
<!-- group labels -->
<div class="gl a" style="left:29px">剪贴板</div>
<div class="gl a" style="left:156px">幻灯片</div>
<div class="gl a" style="left:328px">字体</div>
<div class="gl a" style="left:593px">段落</div>
<div class="gl a" style="left:909px">绘图</div>
<div class="gl a" style="left:1120px">编辑</div>
<!-- clipboard -->
<div class="a t en" style="left:10px;top:104px">粘贴</div>
<div class="a t dis" style="left:65px;top:73px">剪切</div>
<div class="a t dis" style="left:65px;top:95px">复制</div>
<div class="a t dis" style="left:65px;top:118px">格式刷</div>
<!-- slides -->
<div class="a t en" style="left:131px;top:104px">新建</div>
<div class="a t en" style="left:120px;top:120px">幻灯片</div>
<div class="a t en" style="left:190px;top:72px">版式</div>
<div class="a t en" style="left:190px;top:95px">重置</div>
<div class="a t en" style="left:190px;top:118px">节</div>
<div class="a" style="left:336px;top:79px;font-size:13px;line-height:16px;color:#9a9a9a">44</div>
<!-- paragraph -->
<div class="a t dis" style="left:652px;top:73px">文字方向</div>
<div class="a t dis" style="left:652px;top:95px">对齐文本</div>
<div class="a t dis" style="left:652px;top:118px">转换为 <span style="letter-spacing:0.4px;font-size:12.5px">SmartArt</span></div>
<!-- drawing -->
<div class="a t en" style="left:917px;top:105px">排列</div>
<div class="a t dis" style="left:953px;top:105px">快速样式</div>
<div class="a t dis" style="left:1026px;top:73px">形状填充</div>
<div class="a t dis" style="left:1026px;top:95px">形状轮廓</div>
<div class="a t dis" style="left:1026px;top:118px">形状效果</div>
<!-- editing -->
<div class="a t en" style="left:1121px;top:73px">查找</div>
<div class="a t en" style="left:1121px;top:95px">替换</div>
<div class="a t en" style="left:1121px;top:118px">选择</div>




<!-- docbar texts -->
<div class="a t" style="left:90px;top:165px;color:#555">模板专区</div>
<div class="a" style="left:183px;top:165px;font-size:12.5px;line-height:16px;color:#444;letter-spacing:0.2px">ppt3A04.pptm [恢复]</div>
<div class="a t" style="left:1149px;top:165px;color:#6a6a6a">显示多窗口</div>
<!-- main texts -->
<div class="a" style="left:10.5px;top:198px;font-size:15px;line-height:18px;color:#d65a2e;transform-origin:0 0;transform:scaleX(0.85)">1</div>
<div class="a" style="left:510.5px;top:307.5px;font-size:35.5px;line-height:40px;color:#000;-webkit-text-stroke:0.35px #fff;transform-origin:0 0;transform:scaleX(0.79)">PPT</div>
<div class="a" style="left:511px;top:350.5px;font-size:35.2px;line-height:42.4px;color:#111;-webkit-text-stroke:0.45px #fff">对齐<br>文本</div>
<div class="a" style="left:63.5px;top:220px;font-size:5.2px;line-height:6px;color:#666;transform-origin:0 0;transform:scaleX(0.85)">PPT</div>
<div class="a" style="left:63.5px;top:226.5px;font-size:6px;line-height:7.2px;color:#555">对齐<br>文本</div>
<!-- status texts -->
<div class="st a" style="left:5px;word-spacing:1.2px">幻灯片 第 1 张 , 共 1 张</div>
<div class="st a" style="left:186px">中文(中国)</div>
<div class="st a" style="left:260px">已恢复</div>
<div class="st a" style="left:763px">备注</div>
<div class="st a" style="left:824px">批注</div>
<div class="st a" style="left:1161px;top:671.5px;font-size:12.5px">60%</div>
</body>
</html>
